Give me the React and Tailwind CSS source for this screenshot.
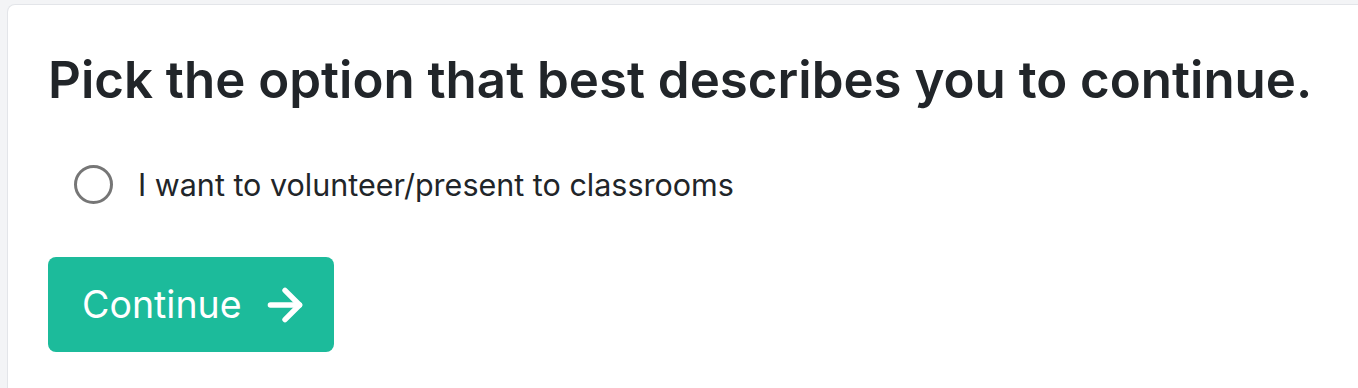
import React, { useState } from "react";
import { ArrowRight } from "lucide-react";

export default function App() {
  const [choice, setChoice] = useState("");

  return (
    <div className="min-h-screen bg-[#f3f4f6] pl-[7px] pt-[4px] font-['Inter',sans-serif]">
      <div className="h-[384px] bg-white border-t border-l border-[#e3e5e9] rounded-tl-lg pl-[40px] pt-[44px]">
        <h1 className="text-[51px] leading-[1.2] font-semibold text-[#212529]">
          Pick the option that best describes you to continue.
        </h1>

        <label className="flex items-center gap-[25px] pl-[26px] mt-[52px] cursor-pointer">
          <input
            type="radio"
            name="role"
            value="volunteer"
            checked={choice === "volunteer"}
            onChange={(e) => setChoice(e.target.value)}
            className="appearance-none w-[39px] h-[39px] rounded-full border-[3px] border-[#767676] checked:border-[#1cbb9b] checked:border-[12px] cursor-pointer"
          />
          <span className="text-[30.5px] leading-[45px] text-[#212529]">I want to volunteer/present to classrooms</span>
        </label>

        <button
          type="button"
          className="mt-[50px] flex items-center gap-[18px] h-[95px] w-[286px] pl-[34px] bg-[#1cbb9b] rounded-lg text-white text-[37.5px] hover:bg-[#18a689]"
        >
          Continue
          <ArrowRight size={50} strokeWidth={2.6} />
        </button>
      </div>
    </div>
  );
}
